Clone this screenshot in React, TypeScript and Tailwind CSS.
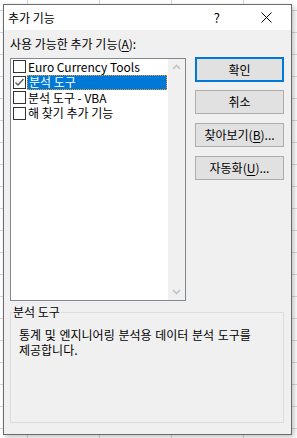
import React from "react";

const font = "font-['Noto_Sans_CJK_KR','Noto_Sans',sans-serif]";

function Check({ checked }: { checked?: boolean }) {
  return (
    <span className="flex h-[13px] w-[13px] shrink-0 items-center justify-center border border-[#333] bg-white">
      {checked && (
        <svg width="11" height="11" viewBox="0 0 11 11">
          <path d="M1.5 5.5 L4 8 L9.5 2" fill="none" stroke="#555" strokeWidth="1.3" />
        </svg>
      )}
    </span>
  );
}

function Row({ label, checked, selected }: { label: string; checked?: boolean; selected?: boolean }) {
  return (
    <div className="flex h-[15.5px] items-center pl-[2px]">
      <Check checked={checked} />
      <span
        className={
          selected
            ? "ml-[1px] flex h-[15px] w-[140px] items-center border border-dotted border-[#f59a23] bg-[#0078d7] pl-[1px] text-white"
            : "ml-[2px] flex h-[15px] items-center"
        }
      >
        {label}
      </span>
    </div>
  );
}

function Btn({ children, primary }: { children: React.ReactNode; primary?: boolean }) {
  return (
    <button
      className={
        primary
          ? "flex h-[25px] w-[89px] items-center justify-center border-2 border-[#0078d7] bg-[#e1e1e1] text-[12px]"
          : "flex h-[24px] w-[89px] items-center justify-center border border-[#adadad] bg-[#e1e1e1] text-[12px]"
      }
    >
      {children}
    </button>
  );
}

export default function App() {
  return (
    <div
      className={`${font} h-[438px] w-[297px] overflow-hidden bg-white bg-[linear-gradient(to_right,#d6d6d6_1px,transparent_1px),linear-gradient(to_bottom,#d6d6d6_1px,transparent_1px)] bg-size-[72px_22px] bg-position-[27px_10px] pl-[3px] pt-[4px] text-[12px] leading-[16px] text-black`}
    >
      <div className="flex h-[431px] w-[289px] flex-col border border-[#6b6b6b] bg-[#f0f0f0] shadow-[2px_2px_5px_rgba(0,0,0,0.25)]">
        <div className="flex h-[25px] shrink-0 items-center bg-white pl-[4px]">
          <span className="text-[12px]">추가 기능</span>
          <span className="ml-auto mr-[41px] text-[13px]">?</span>
          <svg width="11" height="11" viewBox="0 0 11 11" className="mr-[19px]">
            <path d="M0.5 0.5 L10.5 10.5 M10.5 0.5 L0.5 10.5" stroke="#000" strokeWidth="1" />
          </svg>
        </div>
        <div className="flex flex-1 flex-col px-[6px]">
          <div className="flex gap-[9px]">
            <div className="flex flex-col">
              <div className="mt-[6px] h-[16px]">
                사용 가능한 추가 기능(<span className="underline underline-offset-2">A</span>):
              </div>
              <div className="mt-[6px] flex h-[243px] w-[176px] border border-[#828790] bg-white">
                <div className="flex-1 text-[12px]">
                  <Row label="Euro Currency Tools" />
                  <Row label="분석 도구" checked selected />
                  <Row label="분석 도구 - VBA" />
                  <Row label="해 찾기 추가 기능" />
                </div>
                <div className="flex w-[17px] flex-col items-center justify-between bg-[#f0f0f0] py-[5px]">
                  <svg width="9" height="6" viewBox="0 0 9 6">
                    <path d="M1 5 L4.5 1.5 L8 5" fill="none" stroke="#c2c2c2" strokeWidth="1.6" />
                  </svg>
                  <svg width="9" height="6" viewBox="0 0 9 6">
                    <path d="M1 1 L4.5 4.5 L8 1" fill="none" stroke="#c2c2c2" strokeWidth="1.6" />
                  </svg>
                </div>
              </div>
            </div>
            <div className="mt-[27px] flex flex-col gap-[9px]">
              <Btn primary>확인</Btn>
              <div className="-mt-[1px]">
                <Btn>취소</Btn>
              </div>
              <Btn>
                찾아보기(<span className="underline underline-offset-2">B</span>)...
              </Btn>
              <Btn>
                자동화(<span className="underline underline-offset-2">U</span>)...
              </Btn>
            </div>
          </div>
          <fieldset className="mt-[3px] h-[119px] w-[274px] border border-[#dcdcdc] px-[8px]">
            <legend className="ml-[-7px] px-[1px] leading-[16px]">분석 도구</legend>
            <div className="mt-[7px] leading-[15px] [word-spacing:1px]">
              <div>통계 및 엔지니어링 분석용 데이터 분석 도구를</div>
              <div>제공합니다.</div>
            </div>
          </fieldset>
        </div>
      </div>
    </div>
  );
}
